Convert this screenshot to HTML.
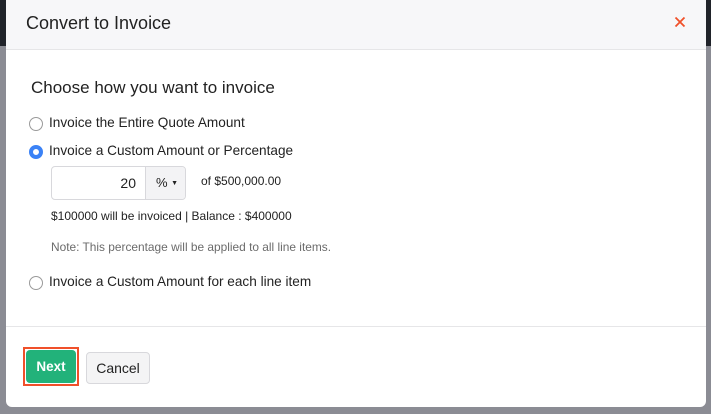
<!DOCTYPE html>
<html><head><style>
*{margin:0;padding:0;box-sizing:border-box}
body{width:711px;height:414px;background:#8b8c94;position:relative;overflow:hidden;font-family:"Liberation Sans",sans-serif;color:#222}
.dk{position:absolute;top:0;height:46px;background:#20232a}
.m{position:absolute;left:6px;top:0;width:700px;height:407px;background:#fff;border-radius:0 0 6px 6px;overflow:hidden}
.hd{position:absolute;left:0;top:0;width:100%;height:50px;background:#f7f7f9;border-bottom:1px solid #e6e6e8}
.a{position:absolute;white-space:nowrap}
.r{position:absolute;width:14px;height:14px;border-radius:50%;border:1px solid #9a9a9a;background:#fff}
.r.on{border:4px solid #3b82f6}
</style></head><body>
<div class="dk" style="left:0;width:6px"></div>
<div class="dk" style="left:706px;width:5px"></div>
<div class="m">
 <div class="hd"></div>
 <div class="a" style="left:20px;top:13px;font-size:18px;color:#222">Convert to Invoice</div>
 <svg class="a" style="left:668px;top:16px" width="12" height="12" viewBox="0 0 12 12"><path d="M1.5 1.5L10.5 10.5M10.5 1.5L1.5 10.5" stroke="#f0502a" stroke-width="1.8"/></svg>
 <div class="a" style="left:25px;top:78px;font-size:17px;color:#222">Choose how you want to invoice</div>
 <div class="r" style="left:23px;top:117px"></div>
 <div class="a" style="left:43px;top:115px;font-size:13.6px">Invoice the Entire Quote Amount</div>
 <div class="r on" style="left:23px;top:145px"></div>
 <div class="a" style="left:43px;top:143px;font-size:13.6px">Invoice a Custom Amount or Percentage</div>
 <div class="a" style="left:45px;top:166px;width:135px;height:34px;border:1px solid #d8d8dc;border-radius:4px;overflow:hidden">
  <div class="a" style="left:0;top:0;width:93px;height:32px;text-align:right;padding-right:9px;line-height:32px;font-size:14px">20</div>
  <div class="a" style="left:93px;top:0;width:41px;height:32px;border-left:1px solid #d8d8dc;background:#f3f3f5;font-size:13px;line-height:32px;padding-left:10px">% <span style="font-size:7px;vertical-align:2px">▼</span></div>
 </div>
 <div class="a" style="left:195px;top:174px;font-size:12px">of $500,000.00</div>
 <div class="a" style="left:45px;top:209px;font-size:12px">$100000 will be invoiced | Balance : $400000</div>
 <div class="a" style="left:45px;top:240px;font-size:11.9px;color:#6b6b6b">Note: This percentage will be applied to all line items.</div>
 <div class="r" style="left:23px;top:276px"></div>
 <div class="a" style="left:43px;top:274px;font-size:13.6px">Invoice a Custom Amount for each line item</div>
 <div class="a" style="left:0;top:326px;width:100%;border-top:1px solid #e6e6e8"></div>
 <div class="a" style="left:17px;top:347px;width:56px;height:39px;border:2px solid #f0502a"></div>
 <div class="a" style="left:20px;top:350px;width:50px;height:33px;background:#22b27a;border-radius:4px;color:#fff;font-size:13.5px;font-weight:bold;text-align:center;line-height:33px">Next</div>
 <div class="a" style="left:80px;top:352px;width:64px;height:32px;background:#f4f4f5;border:1px solid #d8d8dc;border-radius:4px;font-size:14px;text-align:center;line-height:30px">Cancel</div>
</div>
</body></html>
